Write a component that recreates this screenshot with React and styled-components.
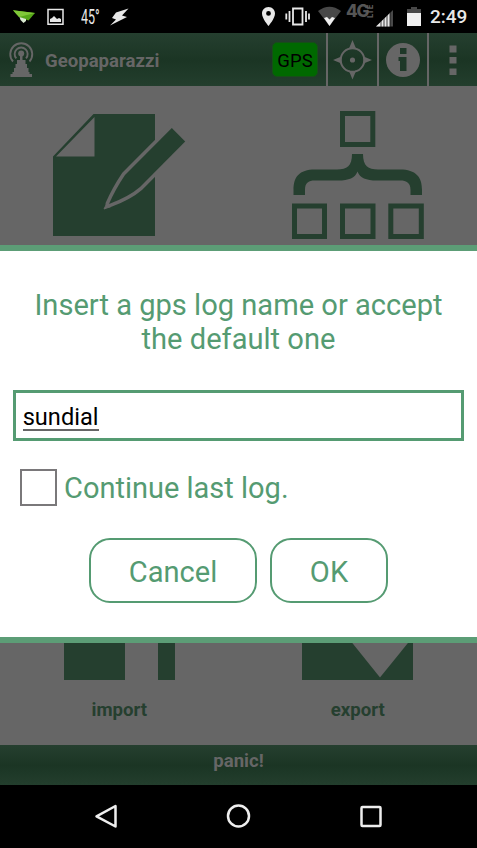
import React from "react";
import styled, { createGlobalStyle } from "styled-components";

const GlobalStyle = createGlobalStyle`
  * { box-sizing: border-box; }
  body { margin: 0; background: #000; font-family: Roboto, sans-serif; }
  svg { display: block; flex: none; }
`;

const pine = "#253f2f";
const dim = "#666666";
const green = "#559b72";

const Screen = styled.div`
  width: 477px;
  height: 848px;
  display: flex;
  flex-direction: column;
  overflow: hidden;
  background: #000;
`;

const StatusBar = styled.header`
  height: 33px;
  flex: none;
  display: flex;
  justify-content: space-between;
  padding: 0 10px 0 13px;
  color: #e8e8e8;
`;

const StatusGroup = styled.div`
  display: flex;
  align-items: flex-start;
`;

const StatusIcon = styled.svg`
  width: ${(p) => p.$w}px;
  height: 33px;
  margin-right: ${(p) => p.$gap}px;
`;

const Temperature = styled.span`
  width: 19px;
  margin-right: 10px;
  font-size: 19.5px;
  line-height: 35px;
  white-space: nowrap;
  transform: scaleX(0.64);
  transform-origin: left;
`;

const Network = styled.span`
  width: 21px;
  height: 22px;
  font-family: Inter, sans-serif;
  font-weight: 800;
  font-size: 17px;
  line-height: 23px;
  letter-spacing: -1.2px;
  color: #555;
`;

const NetworkKind = styled.span`
  width: 8px;
  height: 14px;
  margin: 4px 1px 0 0;
  writing-mode: vertical-rl;
  transform: rotate(180deg);
  font-family: Inter, sans-serif;
  font-weight: 800;
  font-size: 7.5px;
  line-height: 8px;
  color: #5c5c5c;
`;

const Clock = styled.time`
  width: 37px;
  font-size: 19px;
  font-weight: 500;
  line-height: 34px;
  white-space: nowrap;
`;

const AppArea = styled.main`
  position: relative;
  height: 752px;
  flex: none;
  display: flex;
  flex-direction: column;
  background: ${dim};
`;

const ActionBar = styled.div`
  height: 53px;
  flex: none;
  display: flex;
  align-items: center;
  padding-left: 9px;
  background: linear-gradient(#253f2f, #1b3524 52%, #233e2d);
`;

const AppTitle = styled.h1`
  flex: 1;
  margin: 2px 0 0 11px;
  font-size: 18.6px;
  font-weight: 700;
  line-height: 24px;
  color: ${dim};
`;

const GpsButton = styled.button`
  width: 46px;
  height: 35px;
  margin-right: 8px;
  padding: 2px 0 0;
  border: 1px solid #164f18;
  border-radius: 5px;
  background: #006900;
  color: #000;
  font: 400 18.5px/30px Roboto, sans-serif;
`;

const BarAction = styled.button`
  width: ${(p) => p.$w}px;
  height: 53px;
  padding: 0;
  border: 0;
  border-left: 2px solid ${dim};
  background: transparent;
`;

const Dashboard = styled.section`
  height: 659px;
  flex: none;
  display: flex;
  flex-direction: column;
  justify-content: space-between;
`;

const TileRow = styled.div`
  display: grid;
  grid-template-columns: 1fr 1fr;
`;

const Tile = styled.div`
  height: ${(p) => p.$h}px;
  display: flex;
  flex-direction: column;
  align-items: center;
`;

const TileLabel = styled.span`
  margin-top: 18px;
  font-size: 18.6px;
  font-weight: 700;
  line-height: 24px;
  color: ${pine};
`;

const PanicBar = styled.button`
  height: 40px;
  flex: none;
  padding: 0 0 8px;
  border: 0;
  background: linear-gradient(#253f2f, #1b3524 52%, #233e2d);
  color: ${dim};
  font: 700 18.6px/24px Roboto, sans-serif;
`;

const Dialog = styled.form`
  position: absolute;
  left: 0;
  top: 212px;
  width: 477px;
  height: 398px;
  padding: 37px 13px 0;
  border: solid #5c9d76;
  border-width: 6px 0;
  background: #fff;
  color: ${green};
  font-size: 29px;
`;

const Prompt = styled.p`
  margin: 0;
  text-align: center;
  font-size: 29.1px;
  line-height: 34.3px;
`;

const NameField = styled.div`
  height: 51px;
  margin-top: 33.5px;
  padding: 0 6.7px;
  display: flex;
  align-items: center;
  border: 3px solid ${green};
`;

const NameValue = styled.span`
  margin-top: 6px;
  border-bottom: 2px solid #666;
  color: #000;
  font-size: 23.6px;
  line-height: 23px;
`;

const CheckRow = styled.label`
  display: flex;
  align-items: center;
  gap: 7px;
  height: 38px;
  margin: 27px 0 0 7px;
`;

const CheckLabel = styled.span`
  margin-top: 2px;
`;

const CheckBox = styled.span`
  width: 37px;
  height: 37px;
  border: 2px solid #7a787a;
`;

const Buttons = styled.div`
  display: flex;
  gap: 13px;
  margin: 32px 0 0 76px;
`;

const DialogButton = styled.button`
  width: ${(p) => p.$w}px;
  height: 65px;
  padding: 2px 0 0;
  border: 2.4px solid ${green};
  border-radius: 21px;
  background: #fff;
  color: ${green};
  font: 400 29.1px/34px Roboto, sans-serif;
`;

const NavBar = styled.nav`
  height: 63px;
  flex: none;
  display: flex;
  align-items: center;
  gap: 108px;
  padding-left: 94px;
`;

const Mast = () => (
  <svg width="25" height="36" viewBox="9 42 25 36" fill={dim}>
    <g fill="none" stroke={dim} strokeWidth="1.9">
      <path d="M13 61.5A11 11 0 1 1 29.5 61.5" />
      <path d="M16.3 58.4A6.5 6.5 0 1 1 26 58.4" />
    </g>
    <circle cx="21.2" cy="53.5" r="3" />
    <path d="M20 55h2.500v5h3v4h1.500v4h1.500v4h1v2h2.500V77H10.500v-3h2V72h1.500v-4h1.500v-4h1.500v-4h3z" />
  </svg>
);

const pencil = "M171.800 128L185.200 141.500L140 187Q129 196.500 109 204Q115 190 125 175z";

const NoteIcon = () => (
  <svg width="239" height="159" viewBox="0 86 239 159">
    <path d="M93.500 114H155V236H53V156.500zM94.500 117L56 156.500H94.500z" fill={pine} fillRule="evenodd" />
    <path d={pencil} fill="none" stroke={dim} strokeWidth="7" strokeLinejoin="round" />
    <path d="M107 203L104 209L111 206.500z" fill={dim} stroke={dim} strokeLinejoin="round" />
    <path d={pencil} fill={pine} />
  </svg>
);

const TreeIcon = () => (
  <svg width="238" height="159" viewBox="239 86 238 159" fill="none" stroke={pine}>
    <g strokeWidth="5">
      <rect x="342.500" y="113.500" width="30.300" height="31" />
      <rect x="294.500" y="206" width="30" height="30.500" />
      <rect x="342.500" y="206" width="30.500" height="30.500" />
      <rect x="390.800" y="206" width="30.500" height="30.500" />
    </g>
    <path fill={pine} stroke="none" d="M352 154H363C363 166 368 169.500 378 169.500H400C416 169.500 422 177 422 190V195H410.500V190C410.500 183 407 180.500 400 180.500H377C366 180.500 360 178 357.500 171.500C355 178 349 180.500 338 180.500H315C308 180.500 305 183 305 190V195H293.500V190C293.500 177 299 169.500 315 169.500H337C347 169.500 352 166 352 154z" />
  </svg>
);

const Statuses = () => (
  <StatusBar>
    <StatusGroup>
      <StatusIcon $w={22} $gap={12} viewBox="13 0 22 33">
        <path d="M13 10.300L35 13L28.500 20.500L19 17z" fill="#56a719" />
        <path d="M13 10.300L35 13L19 17z" fill="#80c839" />
        <path d="M19.500 17l6.500 2 0 2 -2.500 2-3-3z" fill="#d9ead0" />
      </StatusIcon>
      <StatusIcon $w={17} $gap={17} viewBox="47 0 17 33">
        <path d="M48 9.500H63V24.300H48z" fill="none" stroke="#e8e8e8" strokeWidth="1.500" />
        <path d="M50 22V19l2-1 2-2 2 2 1 1 2-1 2 1v3z" fill="#e8e8e8" />
      </StatusIcon>
      <Temperature>45°</Temperature>
      <StatusIcon $w={19} $gap={0} viewBox="110 0 19 33">
        <path d="M128.500 8.500L122 15.500L127 17L110 25.500L116 19.500L112 18L116 12.500z" fill="#e8e8e8" />
      </StatusIcon>
    </StatusGroup>
    <StatusGroup>
      <StatusIcon $w={14} $gap={9} viewBox="262 0 14 33">
        <path fillRule="evenodd" fill="#e8e8e8" d="M268.500 7C264.500 7 262 10 262 13.500C262 18.500 268.500 26 268.500 26S275 18.500 275 13.500C275 10 272.500 7 268.500 7zM268.500 11a2.400 2.400 0 1 1 0 4.800a2.400 2.400 0 0 1 0-4.800z" />
      </StatusIcon>
      <StatusIcon $w={25} $gap={8} viewBox="285 0 25 33">
        <path d="M293 8.500h9.500v16H293zM289.500 11v11M286.300 13.500v6M306 11v11M309 13.500v6" fill="none" stroke="#e8e8e8" strokeWidth="1.800" />
      </StatusIcon>
      <StatusIcon $w={23} $gap={5} viewBox="318 0 23 33">
        <path d="M318 11Q329.500 2.500 341 11L329.500 26z" fill="#484848" />
        <path d="M324 18L327 17L329.500 19.500L332 17L335 18L329.500 26z" fill="#f0f0f0" />
      </StatusIcon>
      <Network>4G</Network>
      <NetworkKind>LTE</NetworkKind>
      <StatusIcon $w={17} $gap={14} viewBox="376 0 17 33">
        <path d="M376 26.500L393 10V26.500z" fill="#484848" />
        <path d="M376 26.500L390 13V26.500z" fill="#e8e8e8" />
        <path d="M381 21v6M384 18v9M387 15v12M390 12v15" stroke="#111" strokeWidth=".8" />
      </StatusIcon>
      <StatusIcon $w={14} $gap={9} viewBox="407 0 14 33">
        <path d="M411 7h6v2h4v5h-14V9h4z" fill="#484848" />
        <path d="M407 13h14v13h-14z" fill="#f0f0f0" />
      </StatusIcon>
      <Clock>2:49</Clock>
    </StatusGroup>
  </StatusBar>
);

export default function App() {
  return (
    <Screen>
      <GlobalStyle />
      <Statuses />
      <AppArea>
        <ActionBar>
          <Mast />
          <AppTitle>Geopaparazzi</AppTitle>
          <GpsButton>GPS</GpsButton>
          <BarAction $w={51} aria-label="Position">
            <svg width="49" height="53" viewBox="328 33 49 53" fill={dim}>
              <circle cx="352.500" cy="60" r="11.800" fill="none" stroke={dim} strokeWidth="2" />
              <circle cx="352.500" cy="60" r="2.600" />
              <path d="M352.500 40l3.700 9q-3.700-1.500-7.400 0zM352.500 79.500l3.700-9q-3.700 1.500-7.400 0zM333 60l9-3.700q-1.500 3.700 0 7.400zM372 60l-9-3.700q1.500 3.700 0 7.400z" />
            </svg>
          </BarAction>
          <BarAction $w={50} aria-label="Information">
            <svg width="48" height="53" viewBox="379 33 48 53">
              <circle cx="403" cy="60" r="17" fill={dim} />
              <path d="M400 48h6.500v6H400zM398.500 57h8v14H400V61h-1.500z" fill="#1e3828" />
            </svg>
          </BarAction>
          <BarAction $w={50} aria-label="More">
            <svg width="48" height="53" viewBox="429 33 48 53">
              <path d="M449.500 45.500h7v7h-7zM449.500 57h7v6.500h-7zM449.500 68.500h7v6.500h-7z" fill={dim} />
            </svg>
          </BarAction>
        </ActionBar>
        <Dashboard>
          <TileRow>
            <Tile $h={159}><NoteIcon /></Tile>
            <Tile $h={159}><TreeIcon /></Tile>
          </TileRow>
          <TileRow>
            <Tile $h={107}>
              <svg width="111" height="42" viewBox="64 638 111 42" fill={pine}>
                <path d="M64 638h61v42H64zM158 638h17v42h-17z" />
              </svg>
              <TileLabel>import</TileLabel>
            </Tile>
            <Tile $h={107}>
              <svg width="111" height="42" viewBox="302 638 111 42">
                <path d="M302 638H413V680H302z" fill={pine} />
                <path d="M348.300 638H412L380 677.500z" fill={dim} />
              </svg>
              <TileLabel>export</TileLabel>
            </Tile>
          </TileRow>
        </Dashboard>
        <PanicBar>panic!</PanicBar>
        <Dialog onSubmit={(e) => e.preventDefault()}>
          <Prompt>Insert a gps log name or accept<br />the default one</Prompt>
          <NameField><NameValue>sundial</NameValue></NameField>
          <CheckRow><CheckBox /><CheckLabel>Continue last log.</CheckLabel></CheckRow>
          <Buttons>
            <DialogButton type="button" $w={168}>Cancel</DialogButton>
            <DialogButton $w={118}>OK</DialogButton>
          </Buttons>
        </Dialog>
      </AppArea>
      <NavBar>
        <svg width="24" height="26" viewBox="0 0 24 26" fill="none" stroke="#eee" strokeWidth="2.500" strokeLinejoin="round">
          <path d="M21.500 2V22.500L2.500 12.300z" />
        </svg>
        <svg width="25" height="25" viewBox="0 0 25 25" fill="none" stroke="#eee" strokeWidth="2.500">
          <circle cx="12.500" cy="12" r="10.500" />
        </svg>
        <svg width="24" height="24" viewBox="0 0 24 24" fill="none" stroke="#eee" strokeWidth="2.500">
          <rect x="2.500" y="2" width="19" height="19" rx="1" />
        </svg>
      </NavBar>
    </Screen>
  );
}
